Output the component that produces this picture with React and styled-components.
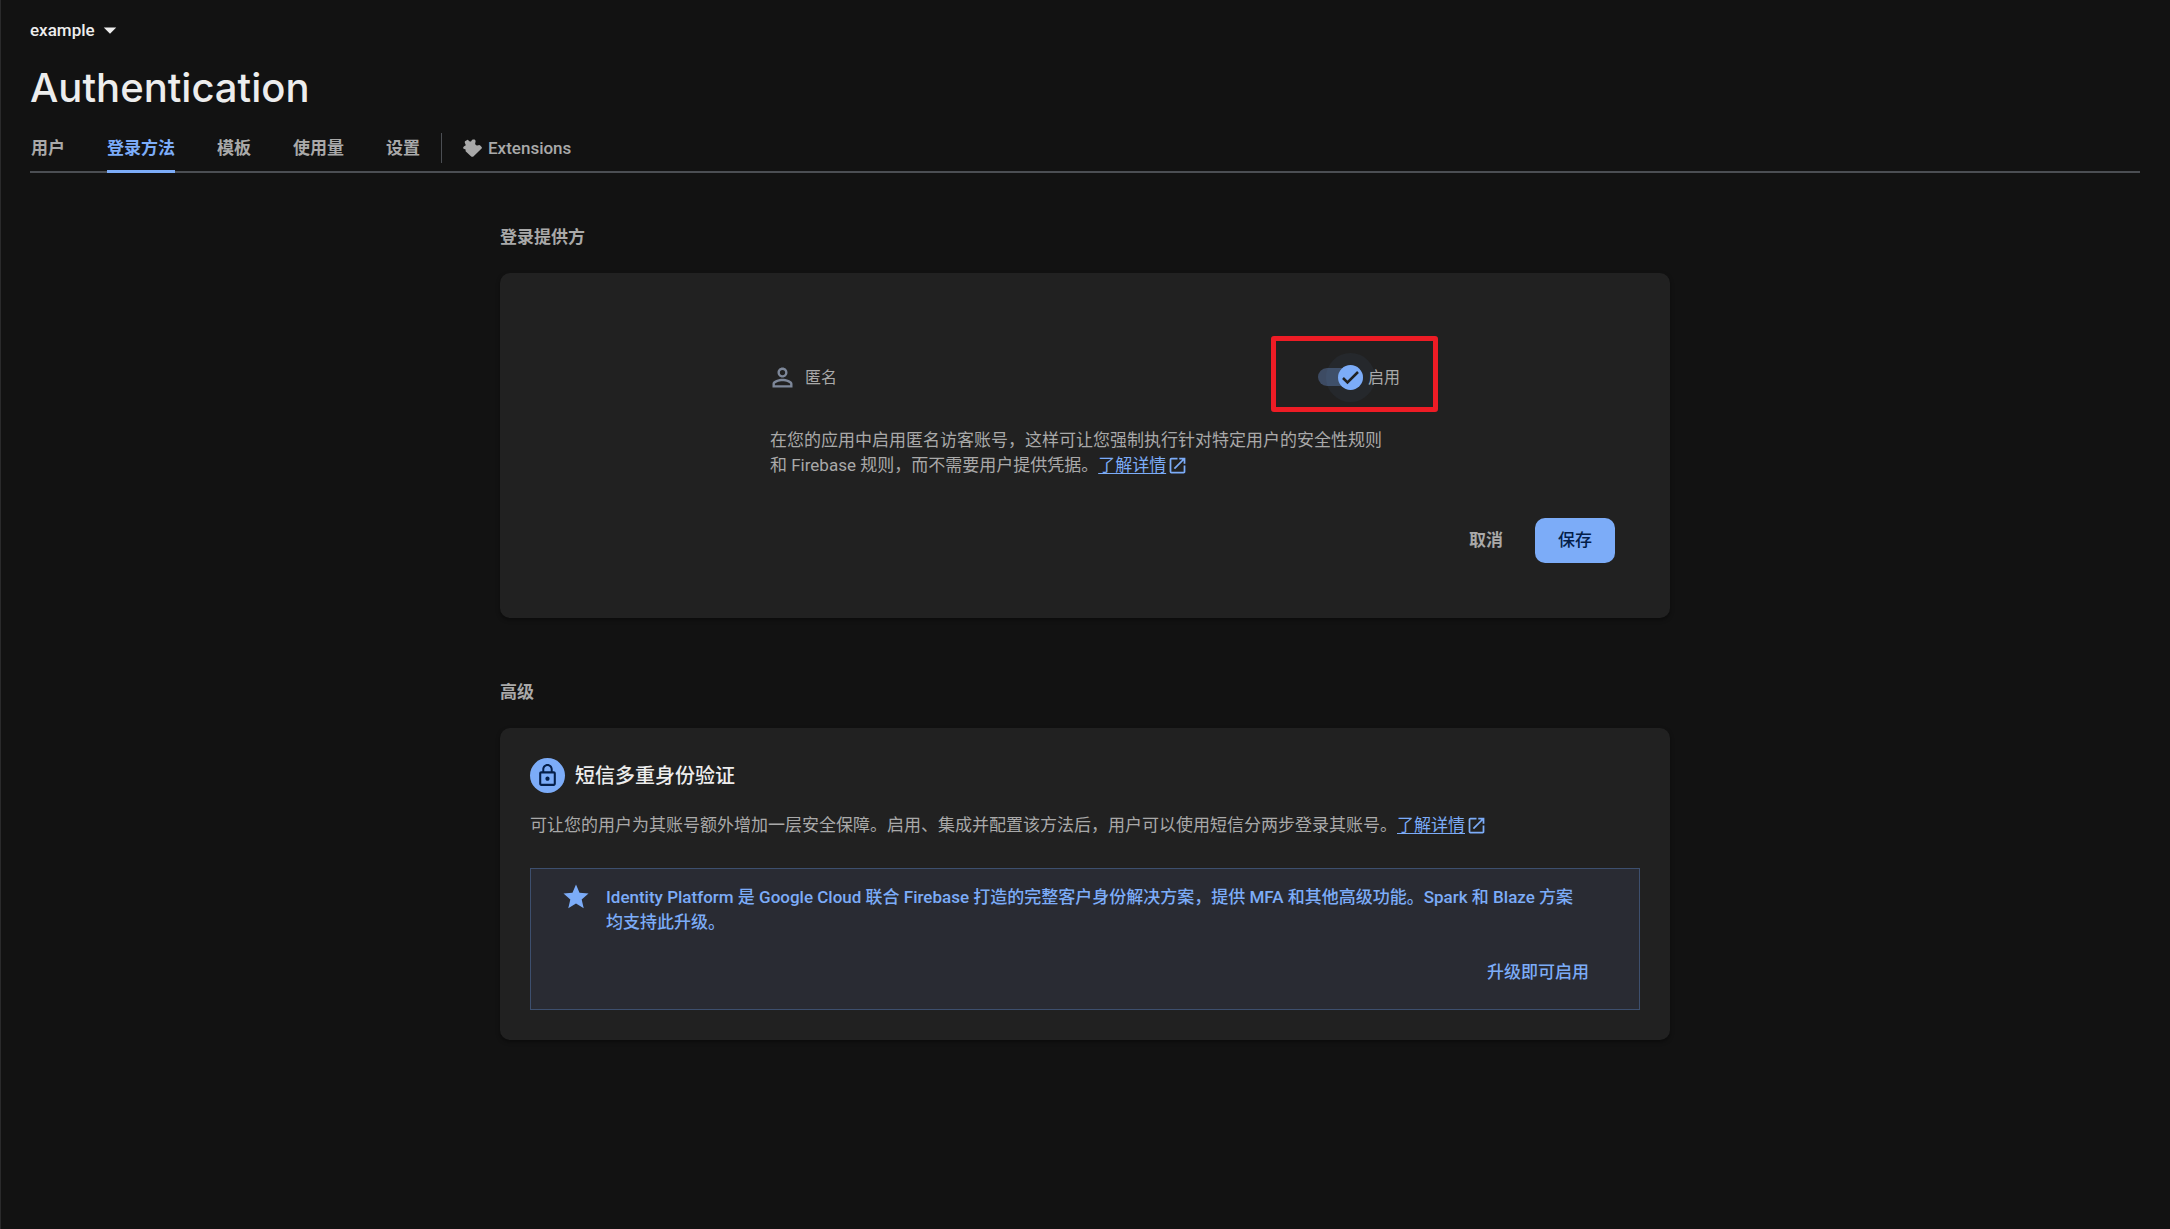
import React, { useState } from "react";
import styled, { createGlobalStyle } from "styled-components";
import { MdArrowDropDown, MdOpenInNew, MdStar, MdLockOutline } from "react-icons/md";

const GlobalStyle = createGlobalStyle`
  *, *::before, *::after { box-sizing: border-box; }
  body {
    margin: 0;
    min-height: 100vh;
    background: #121212 linear-gradient(#2a2a2b, #2a2a2b) left / 1px 100% no-repeat;
    color: #a9a9a9;
    font: 400 17px/25px Roboto, "Noto Sans CJK SC", sans-serif;
  }
  button { font: inherit; color: inherit; background: none; border: 0; padding: 0; cursor: pointer; }
`;

const Header = styled.header`
  display: flex;
  flex-direction: column;
  align-items: flex-start;
  padding: 15px 30px 0;
`;

const ProjectButton = styled.button`
  display: flex;
  align-items: center;
  && { color: #ededed; font-weight: 500; }
`;

const Title = styled.h1`
  margin: 18px 0 0;
  color: #ededed;
  font: 500 40px/50px Inter, sans-serif;
`;

const Tabs = styled.nav`
  display: flex;
  align-self: stretch;
  gap: 42px;
  margin-top: 10px;
  padding-left: 1px;
  box-shadow: inset 0 -2px #4b4e53;
`;

const Tab = styled.a`
  display: flex;
  align-items: center;
  gap: 6px;
  height: 50px;
  color: ${(p) => (p.$active ? "#7cacf8" : "#a9a9a9")};
  font-weight: ${(p) => (p.$latin ? 500 : 700)};
  text-decoration: none;
  background: linear-gradient(${(p) => (p.$active ? "#7cacf8, #7cacf8" : "transparent, transparent")}) bottom / 100% 3px no-repeat;
`;

const TabGroup = styled.div`
  display: flex;
  align-items: center;
  gap: 21px;
`;

const TabDivider = styled.span`
  width: 1px;
  height: 30px;
  background: #4b4e53;
`;

const Main = styled.main`
  max-width: 1170px;
  margin: 0 auto;
  padding-top: 52px;
`;

const Section = styled.section`
  margin-bottom: 62px;
`;

const SectionTitle = styled.h2`
  margin: 0 0 23px;
  color: #a9a9a9;
  font-size: 17px;
  font-weight: 700;
  line-height: 25px;
`;

const Card = styled.div`
  border-radius: 10px;
  background: #212121;
  box-shadow: 0 2px 4px rgba(0, 0, 0, 0.4);
  padding: ${(p) => p.$padding};
`;

const ProviderForm = styled.form`
  display: flex;
  flex-direction: column;
`;

const ProviderBody = styled.div`
  width: 100%;
  max-width: 630px;
  margin: 0 auto;
`;

const ProviderRow = styled.div`
  display: flex;
  align-items: center;
  justify-content: space-between;
  height: 50px;
  font-size: 16px;
`;

const ProviderName = styled.div`
  display: flex;
  align-items: center;
  gap: 10px;
`;

const SwitchLabel = styled.label`
  position: relative;
  display: flex;
  align-items: center;
  gap: 5px;
  cursor: pointer;
`;

const SwitchInput = styled.input`
  appearance: none;
  width: 45px;
  height: 18px;
  margin: 0;
  border-radius: 9px;
  background: #3d4b63;
`;

const Knob = styled.span`
  position: absolute;
  left: ${(p) => (p.$on ? 20 : 0)}px;
  display: grid;
  place-items: center;
  width: 25px;
  height: 25px;
  border-radius: 50%;
  background: #7cacf8;
  box-shadow: 0 0 0 12px rgba(124, 172, 248, 0.05);
  pointer-events: none;
`;

const Highlight = styled.span`
  position: absolute;
  inset: -29px -38px -22px -47px;
  border: 5px solid #ee1c25;
  border-radius: 3px;
  pointer-events: none;
`;

const Description = styled.p`
  margin: ${(p) => p.$margin};
  max-width: ${(p) => p.$width || "none"};
`;

const LearnMore = styled.a`
  color: #7cacf8;
  text-underline-offset: 2px;
  svg { margin-left: 1px; vertical-align: -5px; }
`;

const Actions = styled.div`
  display: flex;
  justify-content: flex-end;
  gap: 12px;
  margin-top: 40px;
  padding-right: 55px;
`;

const ActionButton = styled.button`
  && {
    height: 45px;
    padding: 0 ${(p) => (p.$primary ? 23 : 20)}px;
    border-radius: 10px;
    background: ${(p) => (p.$primary ? "#7cacf8" : "transparent")};
    color: ${(p) => (p.$primary ? "#041e49" : "#a9a9a9")};
    font-weight: ${(p) => (p.$primary ? 500 : 700)};
  }
`;

const FeatureHeading = styled.div`
  display: flex;
  align-items: center;
  gap: 10px;
`;

const FeatureBadge = styled.span`
  display: grid;
  place-items: center;
  width: 35px;
  height: 35px;
  border-radius: 50%;
  background: #7cacf8;
  color: #041e49;
`;

const FeatureTitle = styled.h3`
  margin: 0;
  color: #ededed;
  font-size: 20px;
  font-weight: 500;
  line-height: 30px;
`;

const Banner = styled.aside`
  display: grid;
  grid-template-columns: 30px 1fr;
  column-gap: 15px;
  border: 1px solid #3d4f6e;
  background: #292b33;
  color: #7cacf8;
  font-weight: 500;
  padding: 13px 50px 22px 30px;
`;

const BannerText = styled.p`
  margin: 0;
  padding-top: 3px;
`;

const UpgradeButton = styled.button`
  && {
    grid-column: 2;
    justify-self: end;
    height: 30px;
    margin-top: 22px;
    font-weight: 500;
  }
`;

const TABS = [
  { name: "用户" },
  { name: "登录方法", active: true },
  { name: "模板" },
  { name: "使用量" },
];

function ExtensionIcon() {
  return (
    <svg width="19" height="18" viewBox="0 0 19 18" fill="currentColor" aria-hidden="true">
      <path d="M2 2.200L4.600 .7C5.600 .8 5.800 2.600 7.200 2.600C8.700 2.600 8.300 .6 9.800 .4L11.600 .4C12.600 1 12.800 2.300 12.400 3.400C11.700 5.200 12.600 6.500 14.200 6.400C15.800 6.200 16.400 5.600 17.500 6.700L18.800 8.200C19 8.600 18.900 9.200 18.600 9.500L10.400 17.400C9.700 18 8.900 18 8.200 17.400L2.600 12.300L2.600 10.500L.6 9.800C-.2 8.900 .1 7.700 1.200 7.200L2.800 6.300C2.600 4.800 1.200 4 2 2.200Z" />
    </svg>
  );
}

function PersonIcon() {
  return (
    <svg width="25" height="25" viewBox="2 2 20 20" fill="#7d8799" aria-hidden="true">
      <path d="M12 5.9a2.1 2.1 0 1 1 0 4.2 2.1 2.1 0 0 1 0-4.2m0 9c2.97 0 6.1 1.46 6.1 2.1v1.1H5.9V17c0-.64 3.13-2.1 6.1-2.1M12 4C9.79 4 8 5.79 8 8s1.79 4 4 4 4-1.79 4-4-1.79-4-4-4m0 9c-2.67 0-8 1.34-8 4v3h16v-3c0-2.66-5.33-4-8-4" />
    </svg>
  );
}

function CheckIcon() {
  return (
    <svg width="19" height="19" viewBox="0 0 19 19" fill="none" stroke="#212121" strokeWidth="2.5" aria-hidden="true">
      <path d="M2 10l4.500 4.500L17 4" />
    </svg>
  );
}

export default function App() {
  const [enabled, setEnabled] = useState(true);
  return (
    <>
      <GlobalStyle />
      <Header>
        <ProjectButton type="button">
          example
          <MdArrowDropDown size={30} />
        </ProjectButton>
        <Title>Authentication</Title>
        <Tabs>
          {TABS.map((tab) => (
            <Tab key={tab.name} href="#" $active={tab.active}>{tab.name}</Tab>
          ))}
          <TabGroup>
            <Tab href="#">设置</Tab>
            <TabDivider />
            <Tab href="#" $latin>
              <ExtensionIcon />
              Extensions
            </Tab>
          </TabGroup>
        </Tabs>
      </Header>
      <Main>
        <Section>
          <SectionTitle>登录提供方</SectionTitle>
          <Card $padding="79px 0 55px">
            <ProviderForm onSubmit={(e) => e.preventDefault()}>
              <ProviderBody>
                <ProviderRow>
                  <ProviderName>
                    <PersonIcon />
                    匿名
                  </ProviderName>
                  <SwitchLabel>
                    <SwitchInput
                      type="checkbox"
                      role="switch"
                      checked={enabled}
                      onChange={(e) => setEnabled(e.target.checked)}
                    />
                    <Knob $on={enabled}>
                      <CheckIcon />
                    </Knob>
                    启用
                    <Highlight />
                  </SwitchLabel>
                </ProviderRow>
                <Description $margin="26px 0 0" $width="620px">
                  在您的应用中启用匿名访客账号，这样可让您强制执行针对特定用户的安全性规则和 Firebase 规则，而不需要用户提供凭据。
                  <LearnMore href="#">了解详情<MdOpenInNew size={21} /></LearnMore>
                </Description>
              </ProviderBody>
              <Actions>
                <ActionButton type="button">取消</ActionButton>
                <ActionButton type="submit" $primary>保存</ActionButton>
              </Actions>
            </ProviderForm>
          </Card>
        </Section>
        <Section>
          <SectionTitle>高级</SectionTitle>
          <Card $padding="30px">
            <FeatureHeading>
              <FeatureBadge>
                <MdLockOutline size={25} />
              </FeatureBadge>
              <FeatureTitle>短信多重身份验证</FeatureTitle>
            </FeatureHeading>
            <Description $margin="20px 0 30px">
              可让您的用户为其账号额外增加一层安全保障。启用、集成并配置该方法后，用户可以使用短信分两步登录其账号。
              <LearnMore href="#">了解详情<MdOpenInNew size={21} /></LearnMore>
            </Description>
            <Banner>
              <MdStar size={30} />
              <BannerText>
                Identity Platform 是 Google Cloud 联合 Firebase 打造的完整客户身份解决方案，提供 MFA 和其他高级功能。Spark 和 Blaze 方案均支持此升级。
              </BannerText>
              <UpgradeButton type="button">升级即可启用</UpgradeButton>
            </Banner>
          </Card>
        </Section>
      </Main>
    </>
  );
}
